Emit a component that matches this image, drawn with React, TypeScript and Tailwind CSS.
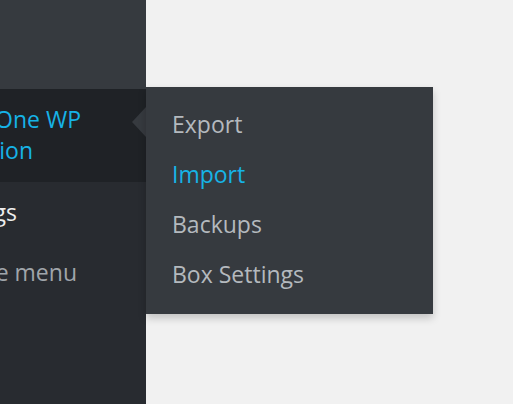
import React from "react";

const font = { fontFamily: '"Open Sans", "Noto Sans", sans-serif' };

export default function App() {
  return (
    <div className="relative flex h-[404px] w-full bg-[#f1f1f1]" style={font}>
      <div className="flex w-[146px] flex-col">
        <div className="h-[89px] bg-[#363a3f]" />
        <div className="relative h-[93px] bg-[#1f2226]">
          <div className="overflow-hidden pt-[15px] text-[23px] leading-[31px] text-[#16b3e6]">
            <div className="flex w-[81px] justify-end whitespace-nowrap"><span>All-in-One WP</span></div>
            <div className="flex w-[33px] justify-end whitespace-nowrap"><span>Migration</span></div>
          </div>
          <div className="absolute right-0 top-[18px] h-0 w-0 border-y-[15px] border-r-[14px] border-y-transparent border-r-[#363a3f]" />
          <div className="absolute left-full top-[-2px] z-10 w-[287px] bg-[#363a3f] pb-[15px] pt-[12px] pl-[26px] text-[23px] leading-[50px] shadow-[0_4px_8px_rgba(0,0,0,0.2)]">
            <div className="text-[#b4b9be]">Export</div>
            <div className="text-[#16b3e6]">Import</div>
            <div className="text-[#b4b9be]">Backups</div>
            <div className="text-[#b4b9be]">Box Settings</div>
          </div>
        </div>
        <div className="flex-1 overflow-hidden bg-[#282b30] text-[23px] leading-[31px]">
          <div className="mt-[15px] flex w-[17px] justify-end whitespace-nowrap text-[#eeeeee]"><span>Settings</span></div>
          <div className="mt-[29px] flex w-[77px] justify-end whitespace-nowrap text-[#a0a5aa]"><span>Collapse menu</span></div>
        </div>
      </div>
    </div>
  );
}
